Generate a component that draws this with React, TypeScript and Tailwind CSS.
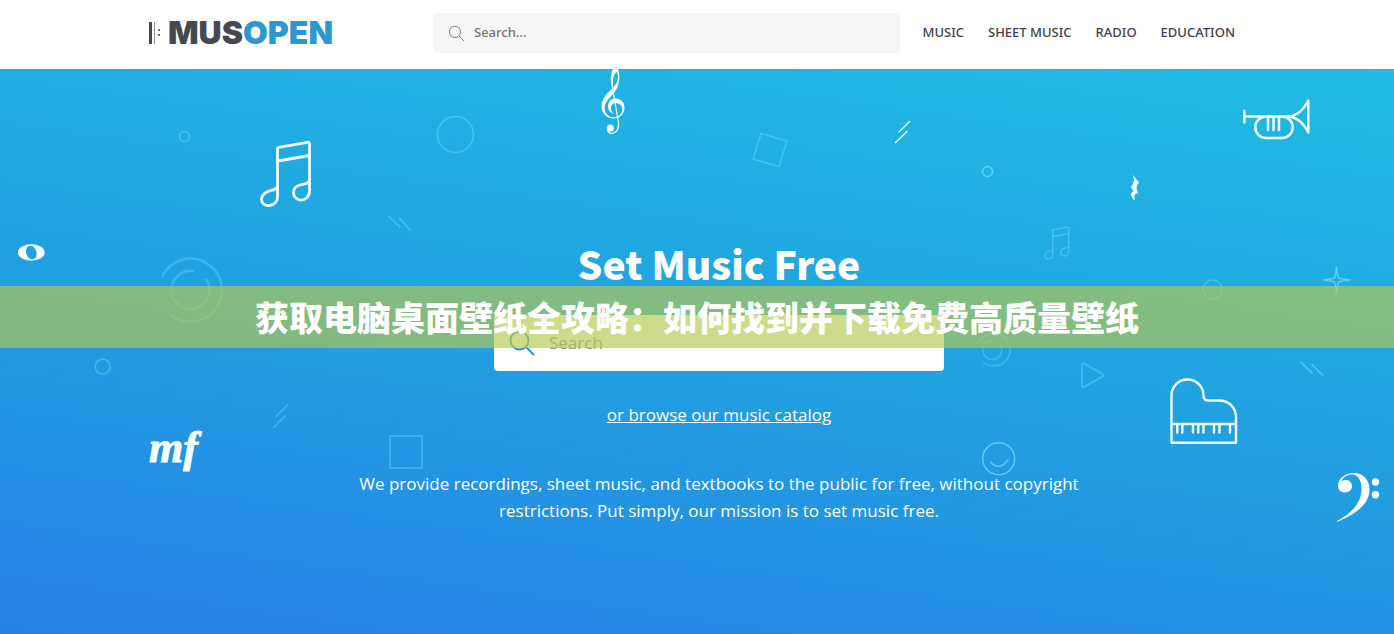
import React from "react";

const navLinks = [
  { label: "MUSIC", href: "#music" },
  { label: "SHEET MUSIC", href: "#sheet-music" },
  { label: "RADIO", href: "#radio" },
  { label: "EDUCATION", href: "#education" },
];

const SearchIcon = ({ className, strokeWidth }: { className: string; strokeWidth: number }) => (
  <svg
    viewBox="0 0 24 24"
    fill="none"
    stroke="currentColor"
    strokeWidth={strokeWidth}
    className={className}
    aria-hidden="true"
  >
    <circle cx="9.5" cy="9.5" r="9" />
    <path d="M16 16l8 8" />
  </svg>
);

const Logo = () => (
  <a href="/" aria-label="Musopen home" className="flex items-center gap-[7px]">
    <svg viewBox="0 0 12 22" className="h-[22px] w-3" aria-hidden="true">
      <path d="M0 0h3v22H0z" fill="#45484f" />
      <path d="M5 0h1v22H5z" fill="#8b8d91" />
      <path d="M9 7h2v2H9zM9 12h2v2H9z" fill="#6d7075" />
    </svg>
    <span className="font-['Inter'] text-[32px] leading-8 font-black text-[#45484f]">
      MUS<span className="text-[#2b98d0]">OPEN</span>
    </span>
  </a>
);

const Header = () => (
  <header className="h-[69px] bg-white pt-[13px]">
    <div className="mx-auto flex max-w-[1096px] items-center">
      <div className="w-[285px] shrink-0">
        <Logo />
      </div>

      {/* Search */}
      <label className="flex h-10 min-w-0 flex-1 items-center gap-2.5 rounded bg-[#f6f6f6] px-[15px]">
        <SearchIcon className="h-[15px] w-[15px] shrink-0 overflow-visible text-gray-500" strokeWidth={1.4} />
        <input
          type="text"
          aria-label="Search the site"
          placeholder="Search..."
          className="w-full bg-transparent font-['Noto_Sans','Open_Sans',sans-serif] text-[13px] font-medium outline-none placeholder:text-[#757575]"
        />
      </label>

      {/* Navigation Links */}
      <nav className="ml-[22px] flex shrink-0 gap-6 pr-2.5 font-['Noto_Sans','Open_Sans',sans-serif] text-[13px] font-medium text-[#3f4248]">
        {navLinks.map((link) => (
          <a key={link.label} href={link.href}>
            {link.label}
          </a>
        ))}
      </nav>
    </div>
  </header>
);

const BeamedNotes = () => (
  <>
    <path d="M17.5 46C16 49 11 49 7 51C3 53 1.5 56 1.5 59C2 63 5.500 65 9 64.500C14 64 17.500 61 17.500 56V7.500Q17.500 6.500 18.500 6.300L47.500 1.300Q49.500 1 49.500 3V50C49.500 56 45 59.500 40 59C36 58.500 33.500 55 33.500 52C33.500 48 36 45 40 44C44 43 48 43 49.500 40" />
    <path d="M17.5 20L49.500 14.500" />
  </>
);

// Instruments and shapes scattered over the hero
const HeroArt = () => (
  <svg
    viewBox="0 69 1394 565"
    preserveAspectRatio="xMidYMin slice"
    className="pointer-events-none absolute inset-0 h-full w-full"
    fill="none"
    strokeLinecap="round"
    strokeLinejoin="round"
    aria-hidden="true"
  >
    {/* faint shapes */}
    <g stroke="#7fe0ff" strokeOpacity="0.4" strokeWidth="1.5">
      <circle cx="184.500" cy="136.500" r="5" />
      <circle cx="455.500" cy="134.500" r="18" />
      <circle cx="987.500" cy="171.500" r="5" strokeOpacity="0.7" />
      <circle cx="1212.700" cy="289.500" r="9.500" />
      <circle cx="102.700" cy="366.700" r="7.500" />
      <path d="M761 133.500L787 141L779 166.500L753 159Z" />
      <path d="M390 436H422V468H390Z" />
      <path d="M388.500 216L400 227M399.500 218.500L410.500 230" />
      <path d="M1301 362L1312 373M1312 364.500L1322.500 375" strokeOpacity="0.55" />
      <path d="M273.500 427.500L285 416M276 416.500L287.500 405" />
      <path d="M1082 365V385.500Q1082 388 1084 387L1102.500 376.500Q1104.500 375.500 1102.500 374L1084 363.500Q1082 362.500 1082 365Z" />
      <path d="M162.300 276A31.500 31.500 0 1 1 171 315M193 271A19 19 0 1 0 206.500 279.500" strokeWidth="2.500" strokeOpacity="0.3" />
      <path d="M979 342A16.500 16.500 0 1 1 983.500 362.500M993 340.500A9.500 9.500 0 1 0 1000 344.500" strokeOpacity="0.35" />
      <circle cx="998.700" cy="458.700" r="16" strokeOpacity="0.65" />
      <path d="M990.500 462Q999 471.500 1008 460" strokeOpacity="0.65" />
      <path
        d="M1336.500 267Q1337 274 1338.500 278Q1343 279.500 1350 280Q1343 280.500 1338.500 282Q1337 286 1336.500 293Q1336 286 1334.500 282Q1330 280.500 1323.500 280Q1330 279.500 1334.500 278Q1336 274 1336.500 267Z"
        strokeOpacity="0.65"
      />
      <g transform="translate(1044 226.500) scale(.5)" strokeWidth="2.600">
        <BeamedNotes />
      </g>
    </g>

    {/* outlined instruments */}
    <g stroke="#f0fcff" strokeWidth="2.800">
      <g transform="translate(260 141)">
        <BeamedNotes />
      </g>
      <path d="M895.500 142.500L907 131.500M899 132L909.500 121.500" strokeWidth="1.600" />
      <g strokeWidth="2.500">
        <path d="M1244.300 111V122.500M1244.300 116.500H1288C1297 116 1304 109 1308.300 100.500V132.500C1304 124 1297 117 1288 116.500" />
        <rect x="1255.300" y="116.500" width="37.400" height="21.500" rx="10.700" />
        <path d="M1268 117V130M1273.500 117V130M1279 117V130" />
      </g>
      <g strokeWidth="2.400">
        <path d="M1171.500 442.700V395.500A16 16 0 0 1 1203.500 395.500C1203.500 398.500 1205 400.500 1208 400.500H1219.500C1229 400.500 1236 408 1236 417V442.700ZM1171.500 424H1236" />
        <path d="M1177.300 425V432.500M1182.300 425V432.500M1193 425V432.500M1198.300 425V432.500M1203.500 425V432.500M1214 425V432.500M1219.500 425V432.500M1230 425V432.500" />
      </g>
    </g>

    {/* solid notation */}
    <g fill="#f6feff">
      {/* treble clef */}
      <path d="M616 84C612 90 601.500 96 601.500 106C601.500 113 607 118.500 613.500 118.500C620 118.500 624.500 114 624.500 108C624.500 102 620.500 98.500 616 98.500C611 98.500 608 102 608 106.500C608 110 610.500 113 614 113.800C611.500 112 610.800 109.500 611 107.500C611.300 104.500 613.500 102.800 616 103C620 103.300 622.300 106 622.300 109C622.300 114 618.500 117.300 613.500 117.300C608 117.300 604.300 113 604.600 107.500C605 100 613 96 616.500 89C619.500 84 620 76 618.500 71Q617.500 66 616 66C612 68 610 75 611 82L612.200 89L613.500 88C611.800 80 614 73 617 72C618.500 75 618.500 80 616 84Z" />
      <path d="M612.500 88L618.400 122C619.400 129 616 133.300 612 133.300C609.500 133.300 608 132 607.300 130" fill="none" stroke="#f6feff" strokeWidth="1.200" />
      <circle cx="610.300" cy="128" r="3.600" />
      {/* whole note */}
      <path
        fillRule="evenodd"
        d="M17.800 252.500A13.500 8.300 0 1 1 44.800 252.500A13.500 8.300 0 1 1 17.800 252.500ZM28.900 245.900A5 7 -20 1 0 33.700 259.100A5 7 -20 1 0 28.900 245.900Z"
      />
      {/* quarter rest */}
      <path d="M1132.500 174.500L1139 182.500C1136 186 1136 188 1138.500 194C1135 192.500 1133.500 195 1135 200.500C1131 197.500 1129 193 1133.500 191.500L1130.800 186.800C1134 183.500 1135 180.500 1132.500 174.500Z" />
      {/* bass clef */}
      <path d="M1337 522C1354 515 1369.500 505 1369.500 489.500C1369.500 479.500 1363 473 1354 473C1345 473 1338 478.500 1338 486C1338 490 1341 492.500 1345 492.500C1349 492.500 1352 489.700 1352 486C1352 482 1348.500 479.500 1345 480C1343 480 1342 481 1341 481.500C1343 477 1348 474.500 1352 474.500C1358.500 474.500 1361.500 481 1361.500 489C1361.500 504 1350 514 1337 521Z" />
      <circle cx="1375.500" cy="482" r="3.700" />
      <circle cx="1375.500" cy="494.700" r="3.700" />
      <text
        x="149"
        y="462"
        stroke="#f6feff"
        strokeWidth="1"
        className="font-['Liberation_Serif',serif] text-[44px] font-bold italic"
      >
        mf
      </text>
    </g>
  </svg>
);

const Hero = () => (
  <main className="relative flex-1 overflow-hidden bg-[linear-gradient(8deg,#2981e8_0%,#258be6_13%,#2393e4_28%,#20a1e1_50%,#20aee2_75%,#20bce3_100%)]">
    <HeroArt />

    <div className="relative flex flex-col items-center pt-[166px] pb-24 pl-11 text-white">
      <h1 className="font-['Noto_Sans_CJK_SC',sans-serif] text-[39px] leading-14 font-black">Set Music Free</h1>

      <label className="mt-6 flex h-14 w-[450px] max-w-full items-center gap-[15px] rounded bg-white px-4">
        <SearchIcon className="h-6 w-6 shrink-0 overflow-visible text-[#2b90c8]" strokeWidth={1.8} />
        <input
          type="text"
          aria-label="Search music"
          placeholder="Search"
          className="w-full bg-transparent text-[17px] text-gray-700 outline-none placeholder:text-[#8f9396]"
        />
      </label>

      <a href="#catalog" className="mt-8 text-[17px] leading-6 underline">
        or browse our music catalog
      </a>

      <p className="mt-[43px] max-w-[730px] text-center text-[17px] leading-[27px]">
        We provide recordings, sheet music, and textbooks to the public for free, without copyright restrictions. Put
        simply, our mission is to set music free.
      </p>
    </div>

    {/* Title band laid over the hero */}
    <div className="absolute inset-x-0 top-[217px] flex h-[62px] items-center justify-center bg-[#b4c94e]/66 pb-0.5">
      <h2 className="font-['Noto_Sans_CJK_SC',sans-serif] text-[34px] font-black whitespace-nowrap text-white">
        获取电脑桌面壁纸全攻略：如何找到并下载免费高质量壁纸
      </h2>
    </div>
  </main>
);

export default function App() {
  return (
    <div className="flex min-h-screen flex-col bg-white font-['Open_Sans','Noto_Sans',sans-serif]">
      <Header />
      <Hero />
    </div>
  );
}
